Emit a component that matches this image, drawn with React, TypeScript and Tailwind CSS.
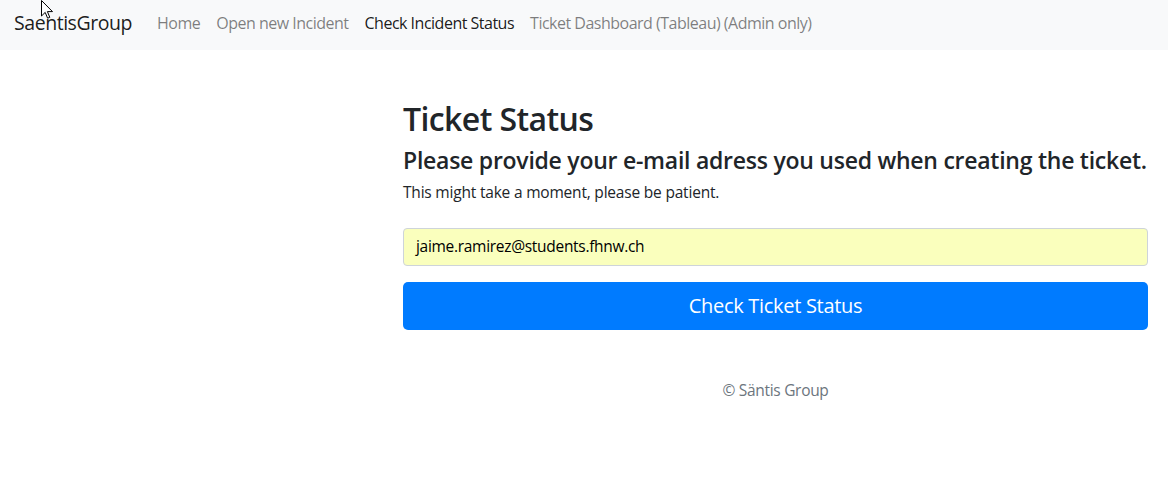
import React from "react";

function Cursor() {
  return (
    <svg
      className="absolute left-[41px] top-0 pointer-events-none"
      width="13"
      height="20"
      viewBox="0 0 13 20"
    >
      <path
        d="M0.5 0.5 L0.5 16 L4.2 12.4 L6.6 18.2 L8.8 17.3 L6.4 11.6 L11.5 11.6 Z"
        fill="#ffffff"
        stroke="#000000"
        strokeWidth="1"
        strokeLinejoin="miter"
      />
    </svg>
  );
}

export default function App() {
  return (
    <div className="relative min-h-[488px] bg-white text-[#212529] font-['Open_Sans',_'Noto_Sans',_sans-serif]">
      <nav className="h-[50px] bg-[#f8f9fa] flex items-center pl-[14px] pr-4 pb-[4px]">
        <span className="text-[19.5px] leading-[30px] text-[rgba(0,0,0,0.9)] mr-[17px] tracking-[-0.45px]">
          SaentisGroup
        </span>
        <ul className="flex items-center text-[16px] leading-6 tracking-[-0.5px]">
          <li className="px-2 text-[rgba(0,0,0,0.5)]">Home</li>
          <li className="px-2 text-[rgba(0,0,0,0.5)]">Open new Incident</li>
          <li className="px-2 text-[rgba(0,0,0,0.9)]">Check Incident Status</li>
          <li className="px-2 text-[rgba(0,0,0,0.5)]">
            Ticket Dashboard (Tableau) (Admin only)
          </li>
        </ul>
      </nav>

      <main className="flex">
        <div className="w-[403px] shrink-0" />
        <div className="w-[745px] pt-[48px]">
          <h1 className="text-[32px] leading-[42px] font-semibold tracking-[-0.6px]">
            Ticket Status
          </h1>
          <h4 className="mt-[5px] text-[23px] leading-[30px] font-semibold tracking-[-0.25px]">
            Please provide your e-mail adress you used when creating the ticket.
          </h4>
          <p className="mt-[5px] text-[15.5px] leading-6 tracking-[-0.2px]">
            This might take a moment, please be patient.
          </p>
          <div className="mt-[24px] h-[38px] rounded-[4px] border border-[#ced4da] bg-[#faffbd] flex items-center px-3 text-[15.5px] tracking-[-0.3px] text-[#000]">
            jaime.ramirez@students.fhnw.ch
          </div>
          <button className="mt-4 w-full h-[48px] rounded-[5px] bg-[#007bff] text-white text-[20px] tracking-[-0.3px] flex items-center justify-center">
            Check Ticket Status
          </button>
          <footer className="mt-[49px] text-center text-[#6c757d] text-[15.5px] tracking-[-0.3px]">
            © Säntis Group
          </footer>
        </div>
      </main>
      <Cursor />
    </div>
  );
}
